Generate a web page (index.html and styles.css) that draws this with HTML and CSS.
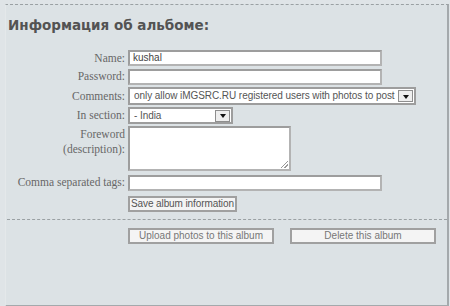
FILE: index.html
```html
<!DOCTYPE html>
<html lang="ru">
<head>
    <meta charset="UTF-8">
    <title>Информация об альбоме</title>
    <link rel="stylesheet" href="styles.css">
</head>
<body>
    <div class="panel">
        <h2 class="title">Информация об альбоме:</h2>

        <form class="album-form">
            <label class="lbl">Name:</label>
            <div class="field field-wide">kushal</div>

            <label class="lbl">Password:</label>
            <div class="field field-wide field-pass"></div>

            <label class="lbl">Comments:</label>
            <div class="select select-comments">
                <span class="select-value">only allow iMGSRC.RU registered users with photos to post</span>
                <span class="select-arrow"></span>
            </div>

            <label class="lbl">In section:</label>
            <div class="select select-section">
                <span class="select-value">- India</span>
                <span class="select-arrow"></span>
            </div>

            <label class="lbl lbl-top">Foreword<br>(description):</label>
            <div class="field field-area"><span class="grip"></span></div>

            <label class="lbl">Comma separated tags:</label>
            <div class="field field-wide field-tags"></div>

            <span></span>
            <div><button type="button" class="btn btn-save">Save album information</button></div>
        </form>

        <div class="divider"></div>

        <div class="actions">
            <button type="button" class="btn btn-wide">Upload photos to this album</button>
            <button type="button" class="btn btn-wide">Delete this album</button>
        </div>
    </div>
</body>
</html>
```

FILE: styles.css
```css
:root {
    --panel-bg: #dce2e5;
    --edge: #a4a9ac;
    --field-border: #9d9d9d;
    --label: #676767;
}

body {
    margin: 0;
    padding-top: 4px;
    background: #dfe4e7;
    height: 306px;
    box-sizing: border-box;
    overflow: hidden;
}

.panel {
    height: 300px;
    margin-left: 5px;
    width: 441px;
    background: var(--panel-bg);
    border-top: 1px dashed #9aa0a3;
    border-right: 2px solid var(--edge);
    border-bottom: 2px solid var(--edge);
    border-left: 1px solid #e4e8ea;
}

.title {
    margin: 12px 0 0 2px;
    font: bold 13.5px/17px "DejaVu Sans", Verdana, sans-serif;
    color: #535353;
}

/* форма */
.album-form {
    display: grid;
    grid-template-columns: 119px auto;
    column-gap: 3px;
    row-gap: 2px;
    margin-top: 16px;
    align-items: center;
}

.lbl {
    text-align: right;
    font: 11.5px/15px "Liberation Serif", "Times New Roman", serif;
    color: var(--label);
}

.lbl-top {
    align-self: start;
    padding-top: 1px;
}

.field {
    box-sizing: border-box;
    height: 16px;
    background: #fff;
    border: 2px solid var(--field-border);
    border-right-color: #b3b3b3;
    border-bottom-color: #b3b3b3;
    font: 10px/12px "Liberation Sans", Arial, sans-serif;
    color: #444;
    padding-left: 3px;
}

.field-wide { width: 254px; }
.field-pass { margin-top: 1px; }
.field-tags { margin-top: 2px; }

.field-area {
    width: 163px;
    height: 45px;
    position: relative;
}

.grip {
    position: absolute;
    right: 1px;
    bottom: 1px;
    width: 7px;
    height: 7px;
    background: linear-gradient(135deg, transparent 45%, #999 45%, #999 55%, transparent 55%, transparent 70%, #999 70%, #999 80%, transparent 80%);
}

.select {
    box-sizing: border-box;
    display: flex;
    align-items: center;
    height: 18px;
    background: #fff;
    border: 2px solid var(--field-border);
    font: 10px/12px "Liberation Sans", Arial, sans-serif;
    color: #555;
    padding-left: 4px;
}

.select-comments { width: 288px; }
.select-section { width: 105px; height: 17px; }

.select-value {
    flex: 1;
    white-space: nowrap;
    overflow: hidden;
    letter-spacing: -0.06px;
}

.select-arrow {
    box-sizing: border-box;
    width: 15px;
    height: 12px;
    margin-right: 1px;
    border: 1px solid #8e8e8e;
    background: #eeeeee;
    display: flex;
    justify-content: center;
    align-items: center;
}

.select-arrow::after {
    content: "";
    border-left: 3px solid transparent;
    border-right: 3px solid transparent;
    border-top: 4px solid #111;
    margin-top: 1px;
}

/* кнопки */
.btn {
    box-sizing: border-box;
    height: 16px;
    padding: 0 2px;
    background: #f4f4f4;
    border: 2px solid #a0a0a0;
    font: 10px/12px "Liberation Sans", Arial, sans-serif;
    color: #777;
    white-space: nowrap;
    cursor: pointer;
}

.btn-save {
    margin-top: 1px;
    padding: 0 1px;
    letter-spacing: -0.1px;
    color: #555;
}

.btn-wide { width: 146px; }

.divider {
    margin: 7px 0 0 1px;
    border-top: 1px dashed #9aa0a3;
}

.actions {
    display: flex;
    gap: 16px;
    margin: 8px 0 0 122px;
}
```
